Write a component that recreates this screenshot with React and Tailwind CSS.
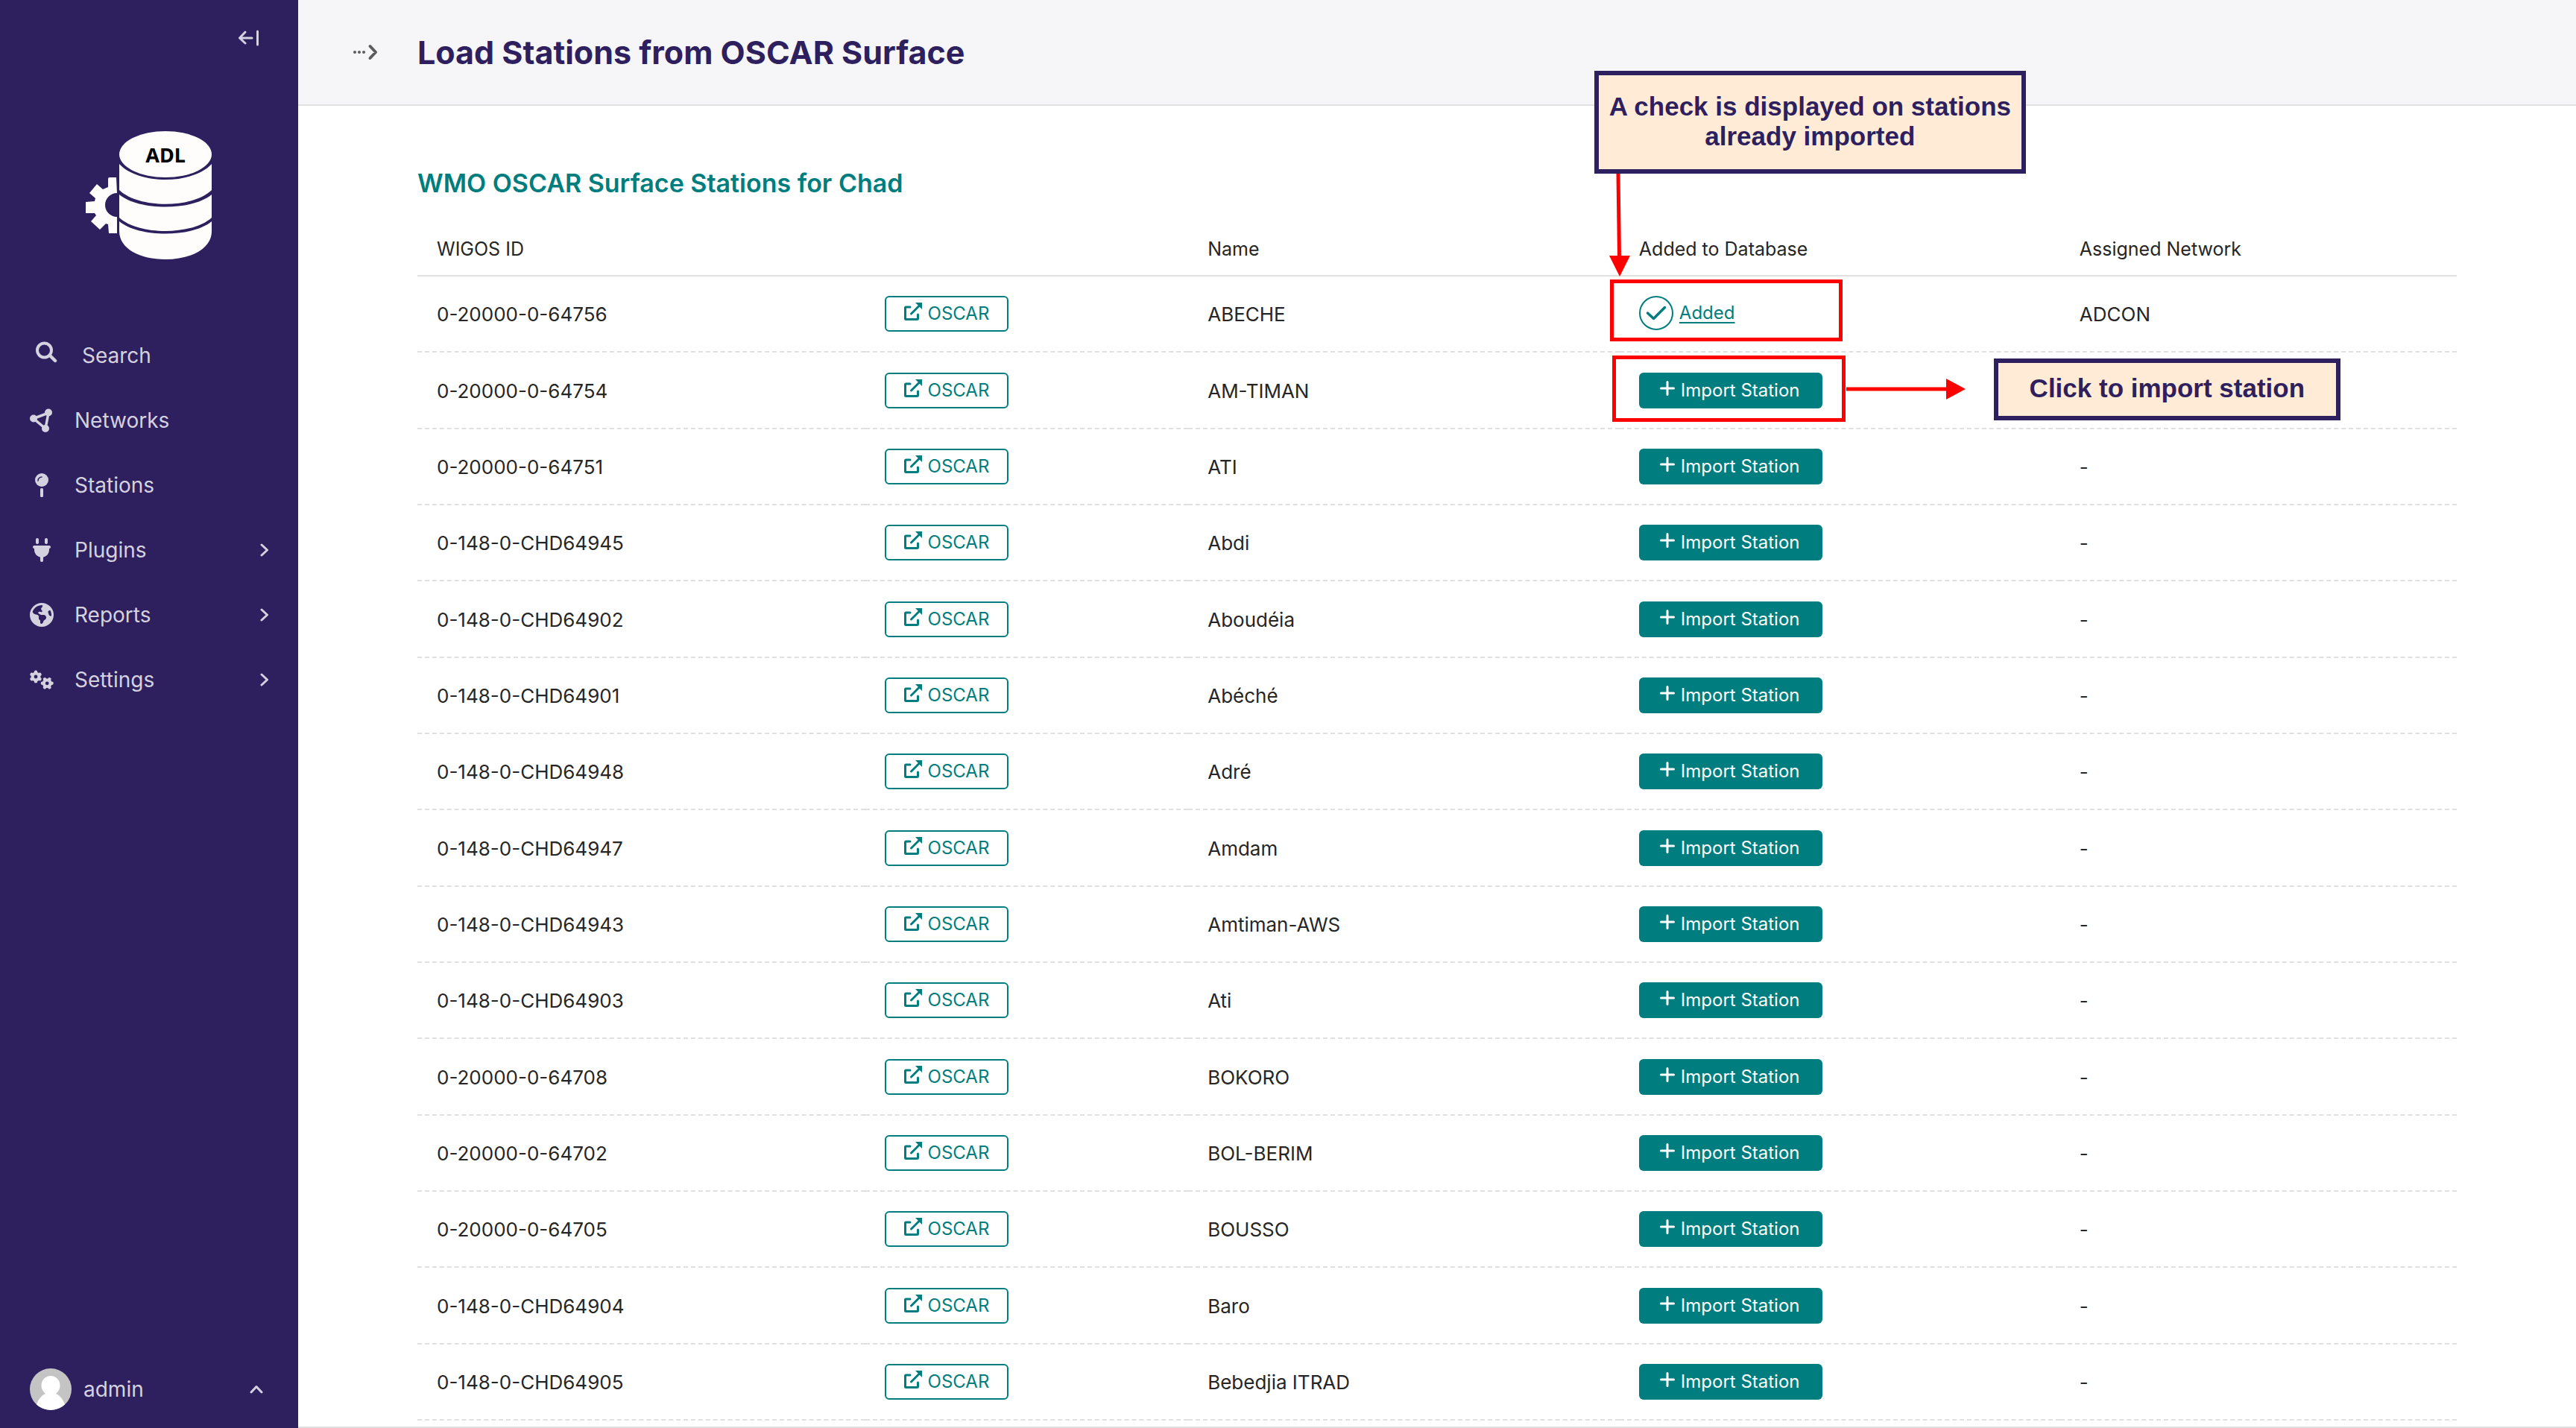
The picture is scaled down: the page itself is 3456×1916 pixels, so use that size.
import { FaEarthAmericas, FaGears } from "react-icons/fa6";

const stations = [
  ["0-20000-0-64756", "ABECHE", "ADCON"],
  ["0-20000-0-64754", "AM-TIMAN", ""],
  ["0-20000-0-64751", "ATI", "-"],
  ["0-148-0-CHD64945", "Abdi", "-"],
  ["0-148-0-CHD64902", "Aboudéia", "-"],
  ["0-148-0-CHD64901", "Abéché", "-"],
  ["0-148-0-CHD64948", "Adré", "-"],
  ["0-148-0-CHD64947", "Amdam", "-"],
  ["0-148-0-CHD64943", "Amtiman-AWS", "-"],
  ["0-148-0-CHD64903", "Ati", "-"],
  ["0-20000-0-64708", "BOKORO", "-"],
  ["0-20000-0-64702", "BOL-BERIM", "-"],
  ["0-20000-0-64705", "BOUSSO", "-"],
  ["0-148-0-CHD64904", "Baro", "-"],
  ["0-148-0-CHD64905", "Bebedjia ITRAD", "-"],
];

function Logo() {
  return (
    <svg viewBox="0 0 170 174" className="ml-[115px] mt-[114px] h-[174px] w-[170px]" fill="#fefdfc">
      <path d="M41 62H32q-2 0-2 2v11l-7 3-8-7-10 12 8 7-1 4-12 1v15h12l2 3-7 8 12 11 8-8 3 1 1 12h11V115a16 16 0 0 1 0-32Z" />
      <ellipse cx="107" cy="31" rx="62" ry="31" />
      <path d="M45 44c26 28 98 28 124 0v35c-26 25-98 25-124 0Z" />
      <path d="M45 85c26 22 98 22 124 0v31c-26 24-98 24-124 0Z" />
      <path d="M45 121c26 22 98 22 124 0v13c0 24-28 38-62 38s-62-14-62-38Z" />
      <text x="107" y="42" textAnchor="middle" className="font-['Noto_Sans'] text-[27px] font-bold" fill="#000">ADL</text>
    </svg>
  );
}

function NetworkIcon() {
  return (
    <svg viewBox="0 0 32 32" className="size-8" fill="currentColor">
      <path d="M5 13.500 25 6 21 27Z" fill="none" stroke="currentColor" strokeWidth="3.500" />
      <circle cx="5" cy="13.500" r="5" />
      <circle cx="25" cy="5.500" r="5" />
      <circle cx="21" cy="27" r="5" />
    </svg>
  );
}

function PinIcon() {
  return (
    <svg viewBox="0 0 32 32" className="size-8" fill="currentColor">
      <circle cx="16" cy="9" r="9" />
      <path d="M11 10a5 5 0 0 1 5-5" fill="none" stroke="#2e1f5e" strokeWidth="1.600" strokeLinecap="round" />
      <rect x="14" y="20" width="4" height="12" rx="1.500" />
    </svg>
  );
}

function PlugIcon() {
  return (
    <svg viewBox="0 0 32 32" className="size-8" fill="currentColor">
      <rect x="8" y="0" width="4" height="8" rx="2" />
      <rect x="20" y="0" width="4" height="8" rx="2" />
      <rect x="4" y="10" width="24" height="4" rx="2" />
      <path d="M6 12h20v4a10 10 0 0 1-8 9.800V30a2 2 0 0 1-4 0v-4.200A10 10 0 0 1 6 16Z" />
    </svg>
  );
}

function ExternalIcon() {
  return (
    <svg viewBox="0 0 24 24" className="mb-1.5 size-6" fill="none" stroke="currentColor" strokeWidth="3" strokeLinecap="round" strokeLinejoin="round">
      <path d="M8 6H2.500q-1 0-1 1v14.500q0 1 1 1H17q1.500 0 1.500-1V16" />
      <path d="M9.500 15 20 4.500" />
      <path d="M15 0h9v9Z" fill="currentColor" stroke="none" />
    </svg>
  );
}

function Chevron({ className }) {
  return (
    <svg viewBox="0 0 12 18" className={className} fill="none" stroke="currentColor" strokeWidth="3" strokeLinecap="round" strokeLinejoin="round">
      <path d="m2 2 7.500 7L2 16" />
    </svg>
  );
}

const nav = [
  { label: "Networks", icon: <NetworkIcon /> },
  { label: "Stations", icon: <PinIcon /> },
  { label: "Plugins", icon: <PlugIcon />, sub: true },
  { label: "Reports", icon: <FaEarthAmericas className="size-8" />, sub: true },
  { label: "Settings", icon: <FaGears className="size-8" />, sub: true },
];

function Sidebar() {
  return (
    <aside className="flex w-[400px] shrink-0 flex-col bg-[#2e1f5e] text-[28px] leading-8 text-[#d5d2df]">
      <button aria-label="Collapse sidebar" className="mr-[52px] mt-[40px] self-end">
        <svg viewBox="0 0 28 22" className="h-[22px] w-[28px]" fill="none" stroke="currentColor" strokeWidth="3" strokeLinecap="round" strokeLinejoin="round">
          <path d="M18 11H2M9 3 1.500 11 9 18M25.500 2v18" />
        </svg>
      </button>
      <Logo />
      <nav className="mt-[84px] flex flex-col">
        <button className="flex h-[86px] items-center pl-[47px]">
          <svg viewBox="0 0 30 30" className="mb-2 size-[30px]" fill="none" stroke="currentColor" strokeLinecap="round">
            <circle cx="12.500" cy="12" r="9.500" strokeWidth="4" />
            <path d="m20 19 7 7" strokeWidth="4.500" />
          </svg>
          <span className="ml-[33px]">Search</span>
        </button>
        {nav.map((n) => (
          <a key={n.label} href="#" className="flex h-[87px] items-center pl-10 pr-[39px]">
            {n.icon}
            <span className="ml-[28px] flex-1">{n.label}</span>
            {n.sub && <Chevron className="h-[18px] w-3" />}
          </a>
        ))}
      </nav>
      <button className="mb-6 mt-auto flex items-center pl-10 pr-[50px] text-left">
        <svg viewBox="0 0 56 56" className="size-14">
          <clipPath id="avatar"><circle cx="28" cy="28" r="28" /></clipPath>
          <g clipPath="url(#avatar)">
            <rect width="56" height="56" fill="#c4c4c4" />
            <ellipse cx="28" cy="23" rx="12.500" ry="13" fill="#fff" />
            <path d="M8 52c3-12 10-18 16-19h8c6 1 13 7 16 19v6H8Z" fill="#fff" />
          </g>
        </svg>
        <span className="ml-4 flex-1">admin</span>
        <Chevron className="h-[18px] w-3 -rotate-90" />
      </button>
    </aside>
  );
}

function ImportButton() {
  return (
    <button className="flex h-12 w-[246px] items-center rounded-[6px] bg-[#007d7e] pl-7 text-[24px] leading-8 text-white">
      <svg viewBox="0 0 20 20" className="mb-1.5 size-5" stroke="currentColor" strokeWidth="3" strokeLinecap="round">
        <path d="M10 1.500v17M1.500 10h17" />
      </svg>
      <span className="ml-2 whitespace-nowrap">Import Station</span>
    </button>
  );
}

export default function App() {
  return (
    <div className="flex min-h-screen bg-white font-[Inter,'Liberation_Sans',sans-serif] text-[#262626]">
      <Sidebar />
      <main className="flex min-w-0 flex-1 flex-col border-b-2 border-[#e0e0e0]">
        <header className="flex h-[142px] items-center border-b-2 border-[#e0e0e0] bg-[#f6f6f8] pl-[73px]">
          <button aria-label="Show breadcrumbs" className="text-[#5c5c5c]">
            <svg viewBox="0 0 34 22" className="h-[22px] w-[34px]" fill="none" stroke="currentColor" strokeWidth="4" strokeLinecap="round" strokeLinejoin="round">
              <path d="M3 11h.01M9 11h.01M15 11h.01M23.500 3l7.500 8-7.500 8" />
            </svg>
          </button>
          <h1 className="ml-[53px] text-[43px] font-bold leading-[56px] text-[#2e1f5e]">Load Stations from OSCAR Surface</h1>
        </header>
        <section className="px-[160px] pb-2 pt-[80px]">
          <h2 className="text-[34px] font-semibold leading-[48px] text-[#007d7e]">WMO OSCAR Surface Stations for Chad</h2>
          <table className="mt-[26px] w-full table-fixed border-separate border-spacing-0 text-left text-[26px] leading-8">
            <thead>
              <tr className="h-[75px] *:border-b-2 *:border-[#e0e0e0] *:px-[26px] *:pt-0.5 *:text-[25px] *:font-normal">
                <th className="w-[21.95%]">WIGOS ID</th>
                <th className="w-[15.85%]" aria-label="OSCAR link" />
                <th className="w-[21.15%]">Name</th>
                <th className="relative w-[21.6%]">
                  Added to Database
                  <div className="absolute -left-[34px] -top-[201px] z-10 h-[138px] w-[579px] border-[6px] border-[#2e1f5e] bg-[#ffebd6] pt-[22px] text-center font-['Liberation_Sans',Arial,sans-serif] text-[35px] font-bold leading-10 text-[#2e1f5e]">
                    A check is displayed on stations already imported
                  </div>
                  <svg viewBox="0 0 28 138" className="absolute -left-[14px] -top-[63px] z-10 h-[138px] w-7">
                    <path d="M12 0 13.500 112" stroke="#f00" strokeWidth="5" />
                    <path d="M0 110h28L14 138Z" fill="#f00" />
                  </svg>
                </th>
                <th>Assigned Network</th>
              </tr>
            </thead>
            <tbody>
              {stations.map(([id, name, network], i) => (
                <tr key={id} className="h-[102px] *:border-b-2 *:border-dashed *:border-[#e0e0e0] *:px-[26px] nth-[3n+2]:h-[103px]">
                  <td className="pt-0.5">{id}</td>
                  <td>
                    <a href="#" className="flex h-12 w-[166px] items-center rounded-[6px] border-2 border-[#007d7e] pl-6 text-[24px] leading-8 text-[#007d7e]">
                      <ExternalIcon />
                      <span className="ml-2">OSCAR</span>
                    </a>
                  </td>
                  <td className="pt-0.5">{name}</td>
                  <td className="relative">
                    {i === 0 ? (
                      <span className="flex items-center pb-0.5 text-[24px] text-[#007d7e]">
                        <svg viewBox="0 0 46 46" className="size-[46px]" fill="none" stroke="currentColor">
                          <circle cx="23" cy="23" r="22" strokeWidth="2" />
                          <path d="m11.500 23 8 7.500L34.500 15.500" strokeWidth="3.500" strokeLinecap="round" strokeLinejoin="round" />
                        </svg>
                        <a href="#" className="ml-2 underline decoration-2 underline-offset-4">Added</a>
                      </span>
                    ) : (
                      <ImportButton />
                    )}
                    {i === 0 && <div className="absolute -left-[13px] top-1 h-[83px] w-[312px] border-[5px] border-[#f00]" />}
                    {i === 1 && (
                      <>
                        <div className="absolute -left-[10px] top-1 h-[89px] w-[313px] border-[5px] border-[#f00]" />
                        <svg viewBox="0 0 160 28" className="absolute left-[304px] top-[35px] h-7 w-[160px]" fill="#f00">
                          <path d="M0 11.500h134V0l26 14-26 14V16.500H0Z" />
                        </svg>
                        <div className="absolute left-[502px] top-2 z-10 h-[83px] w-[465px] border-[6px] border-[#2e1f5e] bg-[#ffebd6] pt-[14px] text-center font-['Liberation_Sans',Arial,sans-serif] text-[35px] font-bold leading-10 text-[#2e1f5e]">
                          Click to import station
                        </div>
                      </>
                    )}
                  </td>
                  <td className="pt-0.5">{network}</td>
                </tr>
              ))}
            </tbody>
          </table>
        </section>
      </main>
    </div>
  );
}
